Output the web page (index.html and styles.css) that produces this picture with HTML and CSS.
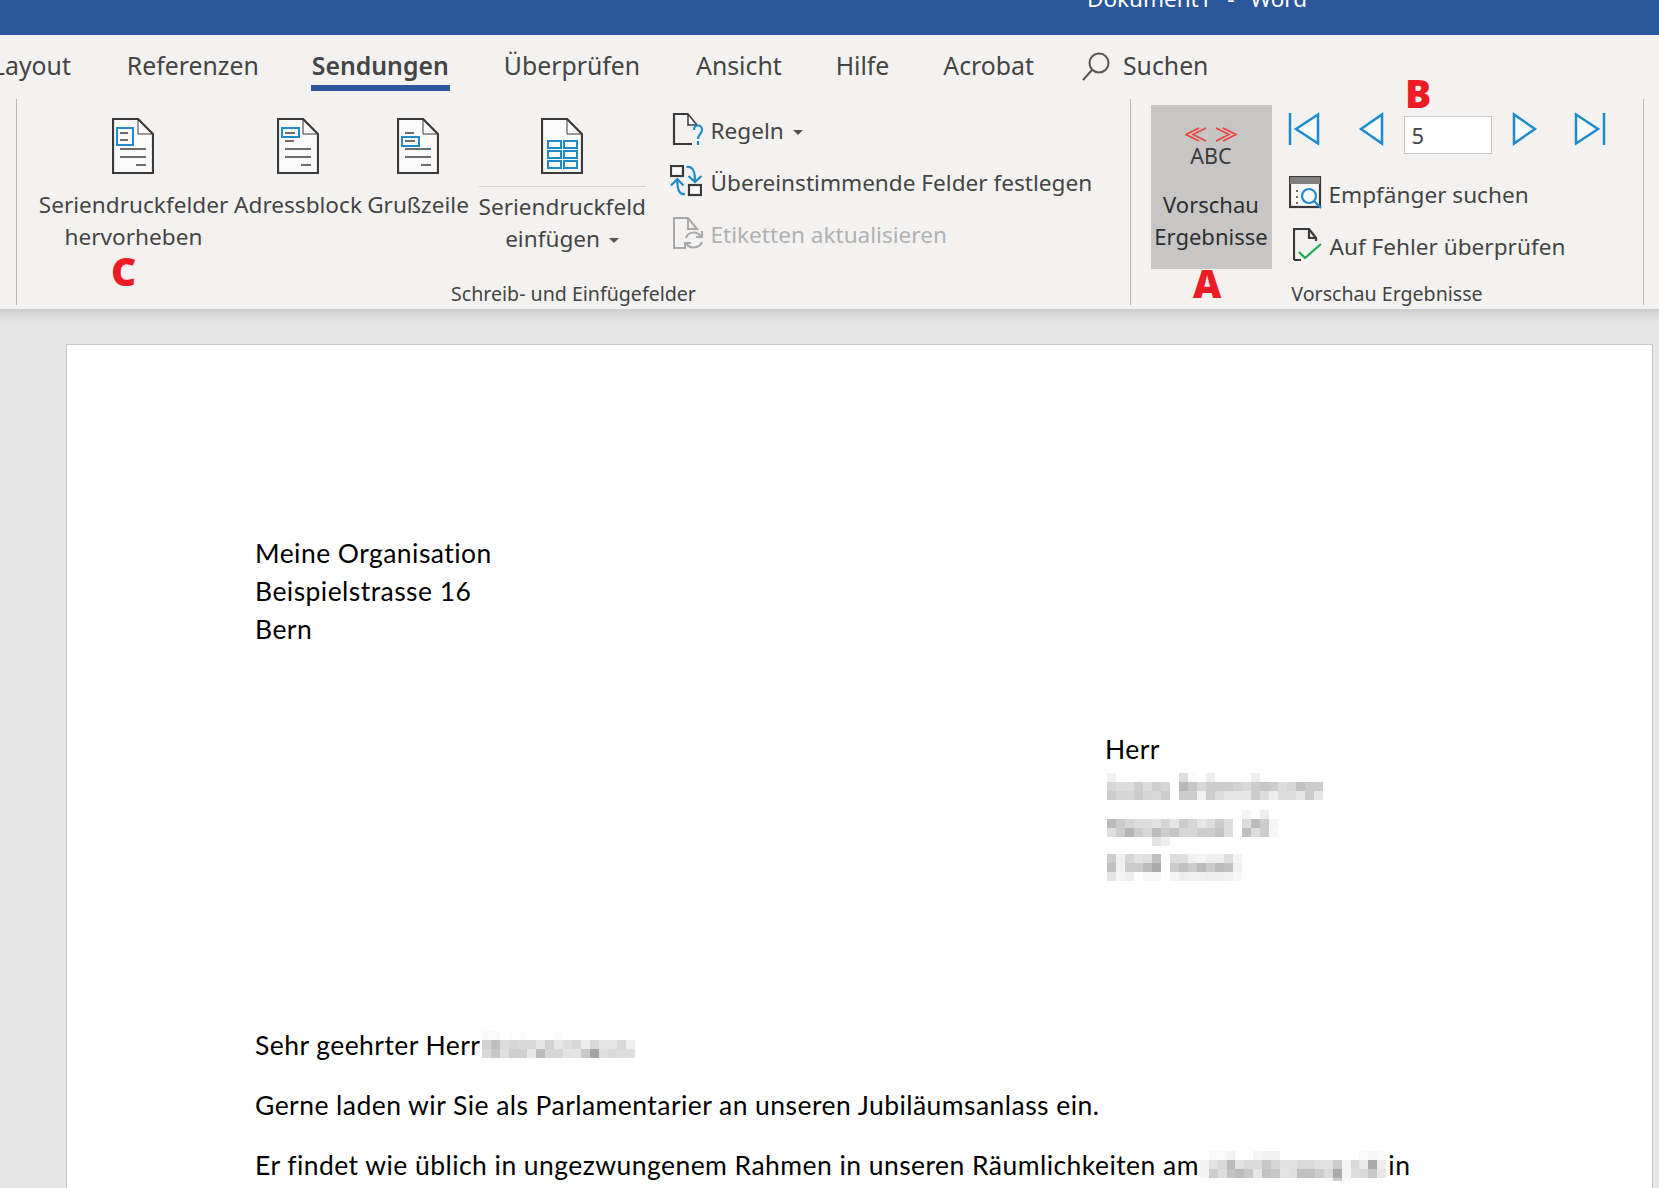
FILE: index.html
```html
<!DOCTYPE html>
<html lang="de">
<head>
<meta charset="utf-8">
<title>Dokument1 - Word</title>
<link rel="stylesheet" href="styles.css">
</head>
<body>
<header class="titlebar"><span class="title">Dokument1&nbsp;&nbsp;-&nbsp;&nbsp;Word</span></header>
<nav class="tabs">
  <span class="tab tab-cut">Layout</span>
  <span class="tab tab-ref">Referenzen</span>
  <span class="tab tab-active">Sendungen</span>
  <span class="tab">Überprüfen</span>
  <span class="tab tab-ansicht">Ansicht</span>
  <span class="tab">Hilfe</span>
  <span class="tab">Acrobat</span>
  <span class="tab tab-search">
    <svg class="ico-search" width="28" height="30" viewBox="0 0 28 30"><circle cx="17" cy="11" r="9.5"/><path d="M10 18 L1 28"/></svg>
    Suchen
  </span>
</nav>
<section class="ribbon">
  <div class="group group-write">
    <div class="group-body">
      <div class="big big-1">
        <svg class="doc" width="42" height="56" viewBox="0 0 42 56"><path class="sheet" d="M1 1H26L41 16V55H1Z"/><path class="fold" d="M26 1V16H41"/><path class="ln" d="M8 31H34M8 39H34M24 47H34M8 15H16M8 22H16"/><rect class="bl" x="5" y="10" width="16" height="17"/></svg>
        <span class="big-label">Seriendruckfelder<br>hervorheben</span>
      </div>
      <div class="big big-2">
        <svg class="doc" width="42" height="56" viewBox="0 0 42 56"><path class="sheet" d="M1 1H26L41 16V55H1Z"/><path class="fold" d="M26 1V16H41"/><path class="ln" d="M8 31H34M8 39H34M24 47H34M8 15H18M8 23H17"/><rect class="bl" x="5" y="10" width="17" height="9"/></svg>
        <span class="big-label">Adressblock</span>
      </div>
      <div class="big big-3">
        <svg class="doc" width="42" height="56" viewBox="0 0 42 56"><path class="sheet" d="M1 1H26L41 16V55H1Z"/><path class="fold" d="M26 1V16H41"/><path class="ln" d="M8 31H34M8 39H34M24 47H34M8 15H17M8 23H18"/><rect class="bl" x="5" y="19" width="17" height="9"/></svg>
        <span class="big-label">Grußzeile</span>
      </div>
      <div class="big big-4">
        <svg class="doc" width="42" height="56" viewBox="0 0 42 56"><path class="sheet" d="M1 1H26L41 16V55H1Z"/><path class="fold" d="M26 1V16H41"/><path class="bl" d="M7 23H20V30H7ZM23 23H36V30H23ZM7 33H20V40H7ZM23 33H36V40H23ZM7 43H20V50H7ZM23 43H36V50H23Z"/></svg>
        <span class="big-label big-split">Seriendruckfeld<br>einfügen <i class="caret"></i></span>
      </div>
      <div class="small-col">
        <div class="small">
          <span class="small-ico"><svg width="33" height="32" viewBox="0 0 33 32"><path class="sheet-open" d="M18 1H4V31H22"/><path class="fold-open" d="M18 1L27 12H18Z"/><path class="q" d="M24 17C24 11 32 11 32 17C32 21 28 21 28 26"/><path class="q" d="M28 28V32"/></svg></span>
          <span>Regeln <i class="caret"></i></span>
        </div>
        <div class="small">
          <span class="small-ico"><svg width="32" height="32" viewBox="0 0 32 32"><rect class="box" x="1" y="1" width="12" height="10"/><rect class="box" x="19" y="20" width="12" height="10"/><path class="arr" d="M16.500 2C22 1 25 5 25 16M18.500 11L25 17L31.500 11M15 29C10 30 7.300 26 7.300 15M1 20.500L7.300 14L13.500 20.500"/></svg></span>
          <span>Übereinstimmende Felder festlegen</span>
        </div>
        <div class="small small-off">
          <span class="small-ico"><svg width="33" height="32" viewBox="0 0 33 32"><path class="off" d="M18 1H4V31H14M18 1L27 12H18Z"/><path class="off" d="M16 21C18 14 28 14 31 20M32 14V20H26M32 25C29 32 19 32 16 26M15 32V26H21"/></svg></span>
          <span>Etiketten aktualisieren</span>
        </div>
      </div>
    </div>
    <div class="group-label">Schreib- und Einfügefelder</div>
  </div>
  <div class="group group-preview">
    <div class="group-body">
      <div class="preview-btn">
        <svg class="chev" width="52" height="15" viewBox="0 0 52 15"><path d="M14 1L1 7.500L14 14M21 1L8 7.500L21 14M31 1L44 7.500L31 14M38 1L51 7.500L38 14"/></svg>
        <span class="abc">ABC</span>
        <span class="preview-label">Vorschau<br>Ergebnisse</span>
      </div>
      <div class="preview-col">
        <div class="nav-row">
          <svg class="nav nav-first" width="30" height="32" viewBox="0 0 30 32"><path d="M1 0V32"/><path d="M29 1.500V30.500L7 16Z"/></svg>
          <svg class="nav nav-prev" width="24" height="32" viewBox="0 0 24 32"><path d="M23 1.500V30.500L2 16Z"/></svg>
          <div class="num">5</div>
          <svg class="nav nav-next" width="24" height="32" viewBox="0 0 24 32"><path d="M1 1.500V30.500L22 16Z"/></svg>
          <svg class="nav nav-last" width="30" height="32" viewBox="0 0 30 32"><path d="M1 1.500V30.500L23 16Z"/><path d="M29 0V32"/></svg>
        </div>
        <div class="small small-find">
          <svg class="find" width="33" height="33" viewBox="0 0 33 33"><rect class="box" x="1" y="1" width="30" height="30"/><rect x="1" y="1" width="30" height="7" fill="#808080"/><path class="ln" d="M7 15H9M7 21H9M7 27H9"/><circle class="arr" cx="20" cy="20" r="7"/><path class="arr" d="M25 25L32 32"/></svg>
          <span>Empfänger suchen</span>
        </div>
        <div class="small small-check">
          <svg class="find" width="29" height="33" viewBox="0 0 29 33"><path class="sheet-open" d="M1 32V1H16L23 10V13M1 32H8M16 1V10H23"/><path class="chk" d="M6 24L12 30L28 16"/></svg>
          <span>Auf Fehler überprüfen</span>
        </div>
      </div>
    </div>
    <div class="group-label">Vorschau Ergebnisse</div>
  </div>
  <span class="mark mark-a">A</span>
  <span class="mark mark-b">B</span>
  <span class="mark mark-c">C</span>
</section>
<main class="canvas">
  <article class="page">
    <p class="sender">Meine Organisation<br>Beispielstrasse 16<br>Bern</p>
    <div class="recipient">
      <div>Herr</div>
      <svg class="mosaic m-a" width="216" height="27" viewBox="0 0 24 3"><rect x="0" y="0" fill="#f0f0f0"/><rect x="8" y="0" fill="#ddd"/><rect x="9" y="0" fill="#fafafa"/><rect x="11" y="0" fill="#eee"/><rect x="16" y="0" fill="#eee"/><rect x="0" y="1" fill="#d6d6d6"/><rect x="1" y="1" fill="#ddd"/><rect x="2" y="1" fill="#ddd"/><rect x="3" y="1" fill="#ccc"/><rect x="4" y="1" fill="#ddd"/><rect x="5" y="1" fill="#d0d0d0"/><rect x="6" y="1" fill="#d6d6d6"/><rect x="8" y="1" fill="#b8b8b8"/><rect x="9" y="1" fill="#c6c6c6"/><rect x="10" y="1" fill="#d8d8d8"/><rect x="11" y="1" fill="#ccc"/><rect x="12" y="1" fill="#ccc"/><rect x="13" y="1" fill="#ccc"/><rect x="14" y="1" fill="#d2d2d2"/><rect x="15" y="1" fill="#d8d8d8"/><rect x="16" y="1" fill="#ccc"/><rect x="17" y="1" fill="#c6c6c6"/><rect x="18" y="1" fill="#ccc"/><rect x="19" y="1" fill="#ddd"/><rect x="20" y="1" fill="#d6d6d6"/><rect x="21" y="1" fill="#c2c2c2"/><rect x="22" y="1" fill="#ccc"/><rect x="23" y="1" fill="#ccc"/><rect x="0" y="2" fill="#ccc"/><rect x="1" y="2" fill="#d6d6d6"/><rect x="2" y="2" fill="#d6d6d6"/><rect x="3" y="2" fill="#ccc"/><rect x="4" y="2" fill="#d6d6d6"/><rect x="5" y="2" fill="#d8d8d8"/><rect x="6" y="2" fill="#ccc"/><rect x="8" y="2" fill="#ccc"/><rect x="9" y="2" fill="#ccc"/><rect x="10" y="2" fill="#f0f0f0"/><rect x="11" y="2" fill="#ccc"/><rect x="12" y="2" fill="#ddd"/><rect x="13" y="2" fill="#e6e6e6"/><rect x="14" y="2" fill="#e6e6e6"/><rect x="15" y="2" fill="#e6e6e6"/><rect x="16" y="2" fill="#ccc"/><rect x="17" y="2" fill="#ddd"/><rect x="18" y="2" fill="#eee"/><rect x="19" y="2" fill="#ddd"/><rect x="20" y="2" fill="#ddd"/><rect x="21" y="2" fill="#e6e6e6"/><rect x="22" y="2" fill="#ccc"/><rect x="23" y="2" fill="#e6e6e6"/></svg>
      <svg class="mosaic m-b" width="198" height="36" viewBox="0 0 22 4"><rect x="15" y="0" fill="#f4f4f4"/><rect x="17" y="0" fill="#eee"/><rect x="0" y="1" fill="#bbb"/><rect x="1" y="1" fill="#ccc"/><rect x="2" y="1" fill="#d6d6d6"/><rect x="3" y="1" fill="#ddd"/><rect x="4" y="1" fill="#ddd"/><rect x="5" y="1" fill="#e2e2e2"/><rect x="6" y="1" fill="#d6d6d6"/><rect x="7" y="1" fill="#e6e6e6"/><rect x="8" y="1" fill="#ccc"/><rect x="9" y="1" fill="#d6d6d6"/><rect x="10" y="1" fill="#e6e6e6"/><rect x="11" y="1" fill="#ddd"/><rect x="12" y="1" fill="#ccc"/><rect x="13" y="1" fill="#ddd"/><rect x="15" y="1" fill="#ddd"/><rect x="16" y="1" fill="#bbb"/><rect x="17" y="1" fill="#ccc"/><rect x="18" y="1" fill="#f6f6f6"/><rect x="0" y="2" fill="#ddd"/><rect x="1" y="2" fill="#ccc"/><rect x="2" y="2" fill="#b4b4b4"/><rect x="3" y="2" fill="#ccc"/><rect x="4" y="2" fill="#d6d6d6"/><rect x="5" y="2" fill="#bbb"/><rect x="6" y="2" fill="#ccc"/><rect x="7" y="2" fill="#c4c4c4"/><rect x="8" y="2" fill="#d6d6d6"/><rect x="9" y="2" fill="#d6d6d6"/><rect x="10" y="2" fill="#ccc"/><rect x="11" y="2" fill="#ccc"/><rect x="12" y="2" fill="#c4c4c4"/><rect x="13" y="2" fill="#ddd"/><rect x="15" y="2" fill="#c0c0c0"/><rect x="16" y="2" fill="#ddd"/><rect x="17" y="2" fill="#ccc"/><rect x="18" y="2" fill="#f8f8f8"/><rect x="5" y="3" fill="#e4e4e4"/><rect x="6" y="3" fill="#eee"/></svg>
      <svg class="mosaic m-c" width="171" height="27" viewBox="0 0 19 3"><rect x="1" y="0" fill="#ccc"/><rect x="2" y="0" fill="#f0f0f0"/><rect x="3" y="0" fill="#d6d6d6"/><rect x="4" y="0" fill="#e4e4e4"/><rect x="5" y="0" fill="#e0e0e0"/><rect x="6" y="0" fill="#c0c0c0"/><rect x="8" y="0" fill="#ddd"/><rect x="9" y="0" fill="#e0e0e0"/><rect x="10" y="0" fill="#f0f0f0"/><rect x="11" y="0" fill="#f4f4f4"/><rect x="12" y="0" fill="#eee"/><rect x="13" y="0" fill="#eee"/><rect x="14" y="0" fill="#ddd"/><rect x="15" y="0" fill="#f4f4f4"/><rect x="1" y="1" fill="#c0c0c0"/><rect x="2" y="1" fill="#f0f0f0"/><rect x="3" y="1" fill="#ccc"/><rect x="4" y="1" fill="#ccc"/><rect x="5" y="1" fill="#bbb"/><rect x="6" y="1" fill="#aaa"/><rect x="8" y="1" fill="#ccc"/><rect x="9" y="1" fill="#c0c0c0"/><rect x="10" y="1" fill="#ccc"/><rect x="11" y="1" fill="#bbb"/><rect x="12" y="1" fill="#ccc"/><rect x="13" y="1" fill="#bbb"/><rect x="14" y="1" fill="#c0c0c0"/><rect x="15" y="1" fill="#f0f0f0"/><rect x="1" y="2" fill="#e4e4e4"/><rect x="2" y="2" fill="#f4f4f4"/><rect x="3" y="2" fill="#eee"/><rect x="5" y="2" fill="#f8f8f8"/><rect x="6" y="2" fill="#f8f8f8"/><rect x="8" y="2" fill="#f4f4f4"/><rect x="9" y="2" fill="#eee"/><rect x="10" y="2" fill="#f0f0f0"/><rect x="11" y="2" fill="#f0f0f0"/><rect x="12" y="2" fill="#eee"/><rect x="13" y="2" fill="#eee"/><rect x="14" y="2" fill="#f0f0f0"/><rect x="15" y="2" fill="#f8f8f8"/></svg>
    </div>
    <p class="para para-first">Sehr geehrter Herr <svg class="mosaic inline-m" width="153" height="27" viewBox="0 0 17 3"><rect x="0" y="0" fill="#fafafa"/><rect x="1" y="0" fill="#fafafa"/><rect x="3" y="0" fill="#fcfcfc"/><rect x="4" y="0" fill="#fcfcfc"/><rect x="8" y="0" fill="#fcfcfc"/><rect x="0" y="1" fill="#d2d2d2"/><rect x="1" y="1" fill="#c0c0c0"/><rect x="2" y="1" fill="#ddd"/><rect x="3" y="1" fill="#d6d6d6"/><rect x="4" y="1" fill="#d8d8d8"/><rect x="5" y="1" fill="#d8d8d8"/><rect x="6" y="1" fill="#e6e6e6"/><rect x="7" y="1" fill="#d2d2d2"/><rect x="8" y="1" fill="#e6e6e6"/><rect x="9" y="1" fill="#e0e0e0"/><rect x="10" y="1" fill="#d8d8d8"/><rect x="11" y="1" fill="#ececec"/><rect x="12" y="1" fill="#d8d8d8"/><rect x="13" y="1" fill="#e4e4e4"/><rect x="14" y="1" fill="#e4e4e4"/><rect x="15" y="1" fill="#d8d8d8"/><rect x="16" y="1" fill="#eee"/><rect x="0" y="2" fill="#d8d8d8"/><rect x="1" y="2" fill="#c8c8c8"/><rect x="2" y="2" fill="#e0e0e0"/><rect x="3" y="2" fill="#d0d0d0"/><rect x="4" y="2" fill="#d0d0d0"/><rect x="5" y="2" fill="#e8e8e8"/><rect x="6" y="2" fill="#bbb"/><rect x="7" y="2" fill="#d6d6d6"/><rect x="8" y="2" fill="#d6d6d6"/><rect x="9" y="2" fill="#e4e4e4"/><rect x="10" y="2" fill="#e4e4e4"/><rect x="11" y="2" fill="#c8c8c8"/><rect x="12" y="2" fill="#a4a4a4"/><rect x="13" y="2" fill="#e0e0e0"/><rect x="14" y="2" fill="#dadada"/><rect x="15" y="2" fill="#dedede"/><rect x="16" y="2" fill="#dedede"/></svg></p>
    <p class="para">Gerne laden wir Sie als Parlamentarier an unseren Jubiläumsanlass ein.</p>
    <p class="para">Er findet wie üblich in ungezwungenem Rahmen in unseren Räumlichkeiten am <svg class="mosaic inline-m2" width="186" height="30" viewBox="0 0 21 3.334" preserveAspectRatio="none"><rect x="1" y="0" fill="#fafafa"/><rect x="2" y="0" fill="#fafafa"/><rect x="3" y="0" fill="#f2f2f2"/><rect x="6" y="0" fill="#f6f6f6"/><rect x="7" y="0" fill="#f2f2f2"/><rect x="8" y="0" fill="#f2f2f2"/><rect x="18" y="0" fill="#fafafa"/><rect x="19" y="0" fill="#f6f6f6"/><rect x="20" y="0" fill="#fafafa"/><rect x="0" y="1" fill="#f4f4f4"/><rect x="1" y="1" fill="#e2e2e2"/><rect x="2" y="1" fill="#d8d8d8"/><rect x="3" y="1" fill="#bbb"/><rect x="4" y="1" fill="#e2e2e2"/><rect x="5" y="1" fill="#dadada"/><rect x="6" y="1" fill="#dadada"/><rect x="7" y="1" fill="#c8c8c8"/><rect x="8" y="1" fill="#d6d6d6"/><rect x="9" y="1" fill="#e2e2e2"/><rect x="10" y="1" fill="#e2e2e2"/><rect x="11" y="1" fill="#dadada"/><rect x="12" y="1" fill="#dadada"/><rect x="13" y="1" fill="#e2e2e2"/><rect x="14" y="1" fill="#e2e2e2"/><rect x="15" y="1" fill="#ccc"/><rect x="16" y="1" fill="#f4f4f4"/><rect x="17" y="1" fill="#dadada"/><rect x="18" y="1" fill="#e8e8e8"/><rect x="19" y="1" fill="#aaa"/><rect x="20" y="1" fill="#eee"/><rect x="0" y="2" fill="#f4f4f4"/><rect x="1" y="2" fill="#ccc"/><rect x="2" y="2" fill="#ddd"/><rect x="3" y="2" fill="#c2c2c2"/><rect x="4" y="2" fill="#bbb"/><rect x="5" y="2" fill="#c8c8c8"/><rect x="6" y="2" fill="#e6e6e6"/><rect x="7" y="2" fill="#c2c2c2"/><rect x="8" y="2" fill="#c8c8c8"/><rect x="9" y="2" fill="#e4e4e4"/><rect x="10" y="2" fill="#e0e0e0"/><rect x="11" y="2" fill="#c0c0c0"/><rect x="12" y="2" fill="#c0c0c0"/><rect x="13" y="2" fill="#ccc"/><rect x="14" y="2" fill="#dadada"/><rect x="15" y="2" fill="#aaa"/><rect x="16" y="2" fill="#f4f4f4"/><rect x="17" y="2" fill="#dedede"/><rect x="18" y="2" fill="#dadada"/><rect x="19" y="2" fill="#c8c8c8"/><rect x="20" y="2" fill="#e8e8e8"/><rect x="14" y="3" fill="#fafafa"/><rect x="15" y="3" fill="#ccc"/><rect x="16" y="3" fill="#f8f8f8"/></svg> in</p>
  </article>
</main>
</body>
</html>
```

FILE: styles.css
```css
* { box-sizing: border-box; }
html, body { margin: 0; height: 100%; }
body {
  width: 1659px;
  height: 1188px;
  overflow: hidden;
  background: #e6e6e6;
  font-family: "Noto Sans", "Open Sans", sans-serif;
  color: #444;
  display: flex;
  flex-direction: column;
}
.titlebar {
  height: 35px;
  flex: none;
  background: #2b579a;
  overflow: hidden;
  padding-left: 1087px;
}
.title {
  display: block;
  color: #fff;
  font-size: 22.500px;
  word-spacing: 2px;
  line-height: 28px;
  margin-top: -15px;
  white-space: nowrap;
}
.tabs {
  height: 60px;
  flex: none;
  background: #f3f2f1;
  display: flex;
  align-items: flex-start;
  gap: 54px;
  margin-left: -8px;
  font-size: 24.800px;
  line-height: 34px;
  padding-top: 13px;
}
.tab { white-space: nowrap; height: 43px; }
.tab-ref { margin-left: 2px; }
.tab-active { font-weight: 600; border-bottom: 6px solid #2b579a; padding: 0 1px; margin-left: -2px; }
.tab-ansicht { margin-left: 2px; }
.tab-search { display: flex; gap: 13px; align-items: flex-start; margin-left: -6px; }
.ico-search { margin-top: 4px; fill: none; stroke: #555; stroke-width: 2; }
.ribbon {
  position: relative;
  height: 214px;
  flex: none;
  background: #f3f2f1;
  padding: 4px 0 4px 16px;
  display: flex;
  font-size: 22.600px;
  line-height: 32px;
}
.group {
  display: flex;
  flex-direction: column;
  border-left: 1.500px solid #b9b7b5;
}
.group-write { width: 1114px; }
.group-preview { width: 514px; border-right: 1.500px solid #b9b7b5; }
.group-body { display: flex; flex: 1; min-height: 0; }
.group-write .group-body { padding-left: 22.500px; }
.group-preview .group-body { padding: 6px 0 0 19.500px; }
.group-label {
  height: 22px;
  line-height: 22px;
  text-align: center;
  font-size: 19.600px;
}
.big {
  display: flex;
  flex-direction: column;
  align-items: center;
  padding-top: 19px;
  text-align: center;
  white-space: nowrap;
  flex: none;
}
.big-1 { width: 188px; margin-right: 7px; }
.big-1 .doc { margin-right: 2px; }
.big-2 { width: 127px; margin-right: 7px; }
.big-3 { width: 99px; margin-right: 11px; }
.big-4 { width: 167px; margin-right: 24px; }
.doc { flex: none; }
.big-label { margin-top: 15px; }
.big-split { border-top: 1px solid #d4d2d0; margin-top: 12px; padding-top: 4px; width: 100%; }
.sheet { fill: #fafafa; stroke: #3a3a3a; stroke-width: 2.200; }
.fold { fill: none; stroke: #3a3a3a; stroke-width: 1; }
.ln { fill: none; stroke: #6d6d6d; stroke-width: 2; }
.bl { fill: none; stroke: #1e8bcd; stroke-width: 2; }
.caret {
  display: inline-block;
  width: 0;
  height: 0;
  border: 5px solid transparent;
  border-top: 5px solid #555;
  border-bottom: 0;
  vertical-align: 4px;
  margin-left: 3px;
}
.small-col { display: flex; flex-direction: column; padding-top: 6px; }
.small { display: flex; align-items: center; height: 52px; white-space: nowrap; gap: 8px; }
.small-ico { width: 33px; height: 32px; flex: none; display: block; margin-top: -4px; }
.small-ico svg { display: block; }
.small-off { color: #b1b1b1; }
.sheet-open { fill: none; stroke: #3a3a3a; stroke-width: 2.200; }
.fold-open { fill: #fafafa; stroke: #3a3a3a; stroke-width: 1.500; }
.q { fill: none; stroke: #1e8bcd; stroke-width: 2.200; }
.box { fill: #fafafa; stroke: #3a3a3a; stroke-width: 2.200; }
.arr { fill: none; stroke: #1e8bcd; stroke-width: 2.200; }
.off { fill: none; stroke: #a8a8a8; stroke-width: 2; }
.chk { fill: none; stroke: #22a854; stroke-width: 2.200; }
.preview-btn {
  width: 121px;
  height: 164px;
  flex: none;
  background: #c8c6c4;
  display: flex;
  flex-direction: column;
  align-items: center;
  padding-top: 22px;
  text-align: center;
}
.chev { fill: none; stroke: #e8413a; stroke-width: 1.600; flex: none; }
.abc { font-size: 21.500px; line-height: 24px; color: #3a3a3a; margin-top: 2px; }
.preview-label { margin-top: 20px; white-space: nowrap; color: #2e2e2e; font-size: 22px; }
.preview-col { display: flex; flex-direction: column; padding-left: 17px; margin-top: -1px; }
.nav-row { display: flex; height: 48px; padding-top: 9px; align-items: flex-start; }
.nav { fill: #fafafa; stroke: #1e8bcd; stroke-width: 2.500; flex: none; overflow: visible; }
.nav-prev { margin-left: 40px; }
.nav-next { margin-left: 21px; }
.nav-last { margin-left: 38px; }
.num {
  width: 88px;
  height: 38px;
  margin: 3px 0 0 21px;
  background: #fff;
  border: 1.500px solid #c6c6c6;
  font-size: 22px;
  line-height: 36px;
  padding-left: 7px;
}
.small-find { margin-top: 17px; gap: 7px; }
.small-check { padding-left: 4px; }
.find { flex: none; margin-top: -6px; }
.mark {
  position: absolute;
  color: #ed1c24;
  font-family: "Open Sans", sans-serif;
  font-weight: 800;
  font-size: 39px;
  line-height: 29px;
}
.mark-a { left: 1193px; top: 173px; }
.mark-b { left: 1405px; top: -17px; }
.mark-c { left: 111px; top: 161px; }
.canvas {
  flex: 1;
  min-height: 0;
  padding: 35px 0 0 66px;
  overflow: hidden;
  background: linear-gradient(#cdcdcd, #e4e4e4 13px, #e6e6e6 20px);
}
.page {
  width: 1587px;
  height: 900px;
  background: #fff;
  border: 1.500px solid #c6c6c6;
  padding: 189px 0 0 188px;
  font-family: Lato, "Liberation Sans", sans-serif;
  font-size: 26.500px;
  letter-spacing: .45px;
  line-height: 38px;
  color: #000;
}
.sender { margin: 0; }
.recipient { margin: 82px 0 0 850px; display: flex; flex-direction: column; align-items: flex-start; }
.mosaic { display: block; shape-rendering: crispEdges; }
.mosaic rect { width: 1px; height: 1px; }
.m-a { margin: 5px 0 0 2px; }
.m-b { margin-top: 10px; margin-left: 2px; }
.m-c { margin-top: 8px; margin-left: -7px; }
.para { margin: 22px 0 0; white-space: nowrap; }
.para-first { margin-top: 145px; }
.inline-m { display: inline-block; vertical-align: -3px; margin-left: -5px; }
.inline-m2 { display: inline-block; vertical-align: -6px; margin: 0 -5px 0 -6px; }
```
